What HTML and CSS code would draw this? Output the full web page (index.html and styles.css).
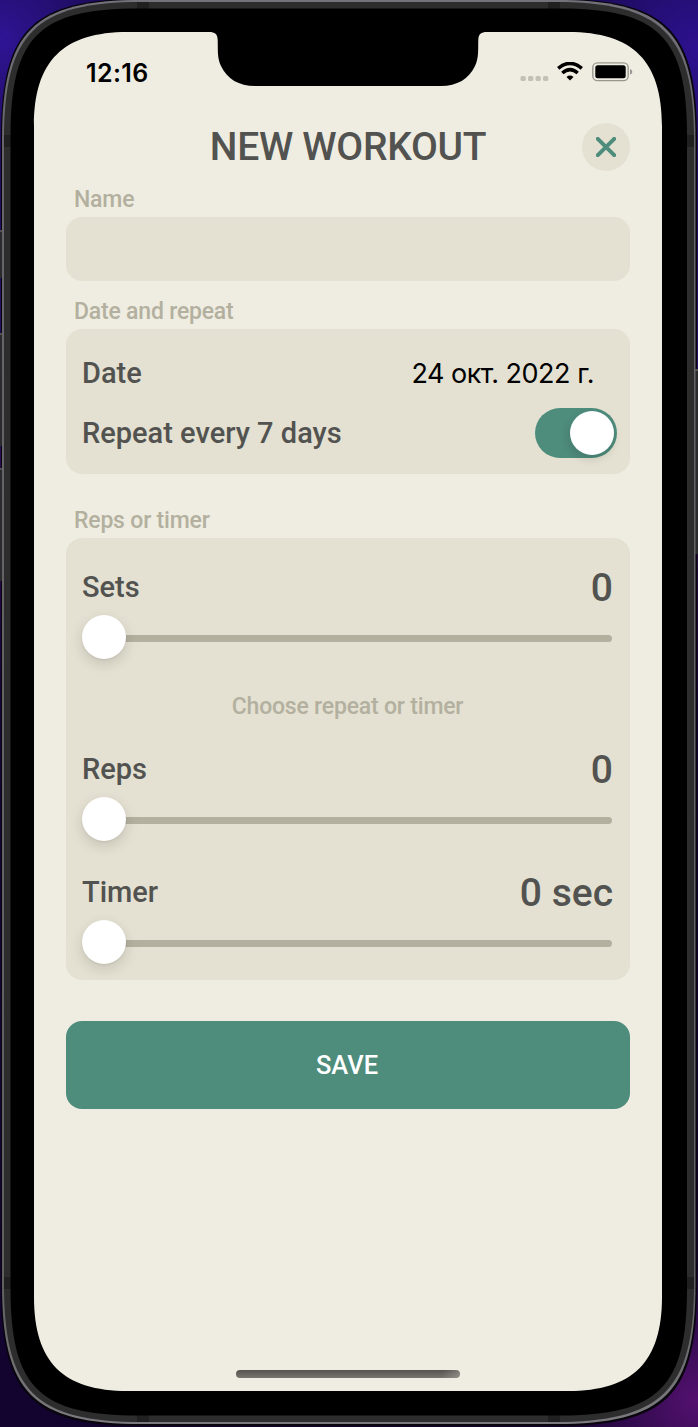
FILE: index.html
```html
<!DOCTYPE html>
<html lang="en">
<head>
<meta charset="utf-8">
<title>New workout</title>
<link rel="stylesheet" href="styles.css">
</head>
<body>
<main class="desktop">
  <svg class="device" viewBox="0 0 698 1427" aria-hidden="true">
    <defs>
      <linearGradient id="rim" x1="0" y1="0" x2="0" y2="1">
        <stop offset="0" stop-color="#737179"/><stop offset=".1" stop-color="#66666a"/><stop offset=".9" stop-color="#606062"/><stop offset="1" stop-color="#7c7a7e"/>
      </linearGradient>
    </defs>
    <path fill="#08050d" d="M1 139C1 30 31 -1 141 -1H556C667 -1 697 30 697 139V1286C697 1395 667 1426 556 1426H141C31 1426 1 1395 1 1286z"/>
    <path fill="#2b2b2d" d="M0 230H3V278H0zM0 333H3V446H0zM0 468H3V581H0zM695 369H698V554H695z"/>
    <path fill="#515154" d="M0 230h3v2H0zM0 333h3v2H0zM0 468h3v2H0zM695 369h3v2h-3z"/>
    <path fill="url(#rim)" d="M2 140C2 31 33 0 142 0H555.500C664.500 0 695.500 31 695.500 140V1284C695.500 1393 664.500 1424 555.500 1424H142C33 1424 2 1393 2 1284z"/>
    <path fill="#2d2d2d" d="M4 140C4 33 35 2 142 2H554C661 2 694 33 694 140V1284C694 1391 661 1422 554 1422H142C35 1422 4 1391 4 1284z"/>
    <path fill="#202020" d="M137 2h12v7h-12zM548 2h12v7h-12zM137 1415h12v7h-12zM548 1415h12v7h-12zM4 135h7v12H4zM687 135h7v12h-7zM4 1277h7v12H4zM687 1277h7v12h-7z"/>
    <path fill="#000" d="M10.500 136C10.500 36.500 39 8.500 138.500 8.500H559C658.500 8.500 687 36.500 687 136V1288C687 1387.500 658.500 1415.500 559 1415.500H138.500C39 1415.500 10.500 1387.500 10.500 1288z"/>
    <path fill="#efede1" d="M34 126C34 61 63 32 128 32H209C215 32 217.500 34 217.700 40C218 49 217 58 221 66C227 79 239 86 255 86H441C457 86 469 79 475 66C479 58 478 49 478.300 40C478.500 34 481 32 487 32H568C633 32 662 61 662 126V1297C662 1362 633 1391 568 1391H128C63 1391 34 1362 34 1297z"/>
  </svg>

  <div class="screen">
    <div class="status">
      <span class="clock">12:16</span>
      <svg class="status-icons" viewBox="0 0 114 24" aria-hidden="true">
        <g fill="#c3c0b6"><rect x=".5" y="14" width="5.300" height="5" rx="1.600"/><rect x="8" y="14" width="5.300" height="5" rx="1.600"/><rect x="15.500" y="14" width="5.300" height="5" rx="1.600"/><rect x="23" y="14" width="5.300" height="5" rx="1.600"/></g>
        <g fill="none" stroke="#000" stroke-width="3.500"><path d="M38.200 6.300Q50 -3.600 61.800 6.300M42.300 11Q50 4.300 57.700 11"/></g>
        <path d="M46.500 14.900Q50 12 53.500 14.900L50 18.600z"/>
        <rect x="72.800" y=".9" width="35.400" height="17.700" rx="4.600" fill="none" stroke="#99978f" stroke-width="1.400"/>
        <rect x="75.300" y="3.300" width="30.400" height="12.900" rx="2.500"/>
        <path fill="#99978f" d="M110 7.200c3 .6 3 4.700 0 5.300z"/>
      </svg>
    </div>

    <header class="header">
      <h1 class="title">NEW WORKOUT</h1>
      <button class="close" aria-label="Close">
        <svg viewBox="0 0 20 20"><path d="M1.800 1.800L18.200 18.200M18.200 1.800L1.800 18.200"/></svg>
      </button>
    </header>

    <label class="caption" for="name">Name</label>
    <input class="name-field" id="name">

    <div class="caption">Date and repeat</div>
    <section class="card schedule">
      <div class="row"><span class="label">Date</span><span class="date">24 окт. 2022 г.</span></div>
      <div class="row"><span class="label">Repeat every 7 days</span><span class="toggle"><span class="toggle-knob"></span></span></div>
    </section>

    <div class="caption">Reps or timer</div>
    <section class="card effort">
      <div class="setting">
        <div class="row"><span class="label">Sets</span><span class="value">0</span></div>
        <div class="slider"><span class="thumb"></span><span class="track"></span></div>
      </div>
      <p class="hint">Choose repeat or timer</p>
      <div class="setting">
        <div class="row"><span class="label">Reps</span><span class="value">0</span></div>
        <div class="slider"><span class="thumb"></span><span class="track"></span></div>
      </div>
      <div class="setting timer">
        <div class="row"><span class="label">Timer</span><span class="value">0 sec</span></div>
        <div class="slider"><span class="thumb"></span><span class="track"></span></div>
      </div>
    </section>

    <button class="save">SAVE</button>
    <div class="home-bar"></div>
  </div>
</main>
</body>
</html>
```
FILE: styles.css
```css
* { box-sizing: border-box; }

body { margin: 0; }

.desktop {
  position: relative;
  width: 698px;
  height: 1427px;
  overflow: hidden;
  background:
    radial-gradient(circle at 0 40px, #2f1494, transparent 110px),
    radial-gradient(circle at 698px 50px, #2d1190, transparent 120px),
    radial-gradient(circle at 698px 1400px, #53116f, transparent 140px),
    linear-gradient(180deg, #1c0b58 0, #241064 28%, #2b0b48 34%, #16033a 50%, #12042e 100%);
  font-family: Roboto, "Liberation Sans", sans-serif;
  font-weight: 500;
  color: #525350;
}

.device {
  position: absolute;
  inset: 0;
  width: 698px;
  height: 1427px;
}

.screen {
  position: relative;
  display: flex;
  flex-direction: column;
  width: 628px;
  height: 1359px;
  margin: 32px 0 0 34px;
  padding: 0 32px;
}

.status {
  display: flex;
  justify-content: space-between;
  height: 80px;
  padding: 25px 0 0 20px;
}

.clock {
  padding-top: 1px;
  font: 600 25px/30px Inter, sans-serif;
  letter-spacing: .4px;
  color: #000;
}

.status-icons {
  width: 114px;
  height: 24px;
  margin: 5px -4px 0 0;
}

.header {
  display: grid;
  grid-template-columns: 48px 1fr 48px;
  align-items: center;
  height: 70px;
}

.title {
  grid-column: 2;
  margin: 0;
  font-size: 39px;
  line-height: 46px;
  font-weight: 500;
  letter-spacing: -.3px;
  text-align: center;
  white-space: nowrap;
}

.close {
  display: grid;
  place-items: center;
  width: 48px;
  height: 48px;
  padding: 0;
  border: 0;
  border-radius: 50%;
  background: #e4e1d2;
}

.close svg {
  width: 20px;
  height: 20px;
  fill: none;
  stroke: #4e8c7c;
  stroke-width: 4;
  stroke-linecap: round;
}

.caption {
  height: 35px;
  padding-left: 8px;
  font-size: 23px;
  line-height: 35px;
  letter-spacing: -.2px;
  color: #b3b09f;
}

.name-field {
  height: 64px;
  margin-bottom: 13px;
  padding: 0 16px;
  border: 0;
  border-radius: 16px;
  background: #e4e1d2;
  font: inherit;
}

.card {
  border-radius: 16px;
  background: #e4e1d2;
}

.row {
  display: flex;
  align-items: center;
  justify-content: space-between;
}

.label { font-size: 29px; line-height: 36px; }

.schedule {
  height: 145px;
  margin-bottom: 29px;
  padding: 14px 13px 0 16px;
}

.schedule .row { height: 60px; }

.date {
  margin-right: 23px;
  padding-top: 2px;
  font: 400 27px/36px Inter, sans-serif;
  letter-spacing: -.5px;
  color: #000;
}

.toggle {
  display: flex;
  justify-content: flex-end;
  width: 82px;
  height: 50px;
  padding: 3px;
  border-radius: 25px;
  background: #4e8c7c;
}

.toggle-knob {
  width: 44px;
  height: 44px;
  border-radius: 50%;
  background: #fff;
  box-shadow: -1px 4px 10px #0002;
}

.effort {
  height: 442px;
  margin-bottom: 41px;
  padding: 27px 17px 0 16px;
}

.effort .label { padding-bottom: 2px; }

.value { font-size: 39px; line-height: 46px; }

.setting { height: 97px; }

.slider {
  display: flex;
  align-items: center;
  height: 44px;
  margin-top: 4px;
}

.thumb {
  z-index: 1;
  flex: none;
  width: 44px;
  height: 44px;
  border-radius: 50%;
  background: #fff;
  box-shadow: 0 5px 14px #0002, 0 1px 2px #0001;
}

.track {
  flex: 1;
  height: 7px;
  margin: 3px 1px 0 -3px;
  border-radius: 4px;
  background: #b3b09f;
}

.hint {
  height: 85px;
  margin: 0;
  padding-top: 27px;
  font-size: 23px;
  line-height: 36px;
  letter-spacing: -.2px;
  text-align: center;
  color: #b3b09f;
}

.timer { margin-top: 26px; }

.save {
  height: 88px;
  padding: 0 2px 0 0;
  border: 0;
  border-radius: 16px;
  background: #4e8c7c;
  font: 500 25.500px/30px Roboto, sans-serif;
  color: #fff;
}

.home-bar {
  align-self: center;
  width: 224px;
  height: 8px;
  margin: auto 0 13px;
  border-radius: 4px;
  background: linear-gradient(100deg, transparent 92%, #aaa8a080), linear-gradient(#55534e, #77756e);
}
```
